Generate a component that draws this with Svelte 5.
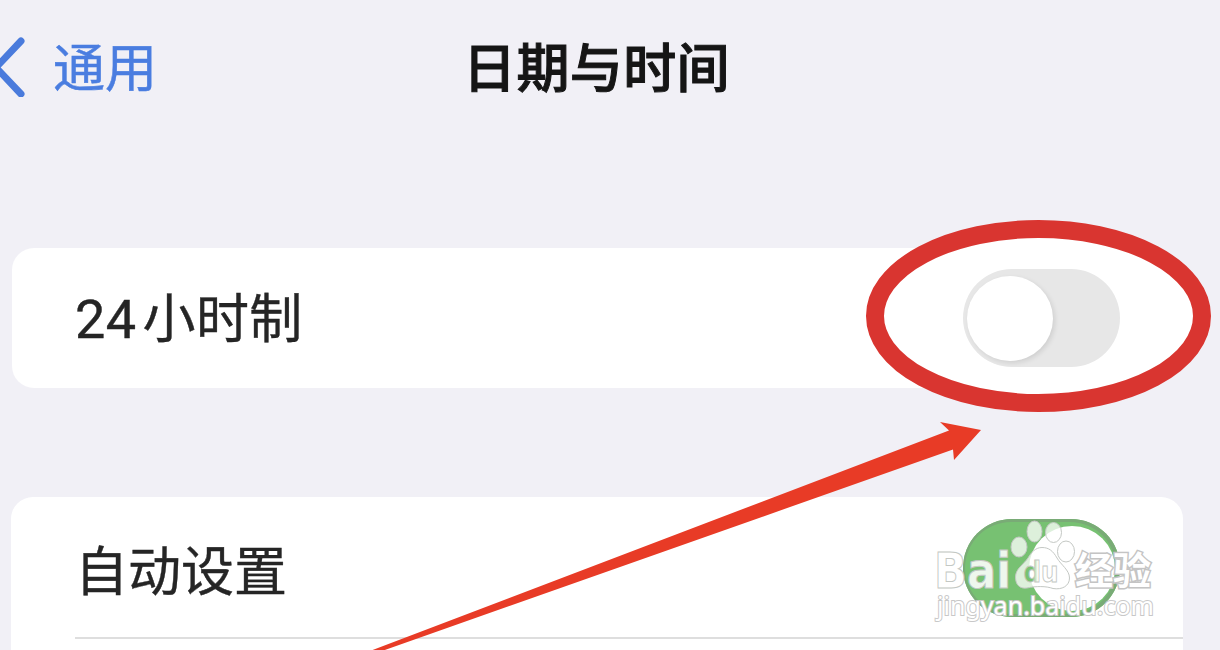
<script>
  const rows = [
    { prefix: "24", label: "小时制", on: false },
    { prefix: "", label: "自动设置", on: true },
  ];
</script>

<main class="screen">
  <svg class="marks" width="1220" height="650" viewBox="0 0 1220 650">
    <ellipse cx="1038.5" cy="316" rx="163.5" ry="87" fill="#fff" />
  </svg>

  <header class="navbar">
    <div class="back">
      <svg width="30" height="64" viewBox="0 0 30 64">
        <path d="M21 8 L-4 34.5 L21 61" />
      </svg>
      <span>通用</span>
    </div>
    <h1>日期与时间</h1>
  </header>

  {#each rows as row, i}
    <section class="card" class:last={i === 1}>
      <div class="row">
        <div class="label">
          {#if row.prefix}<span class="digits">{row.prefix}</span>{/if}<span>{row.label}</span>
        </div>
        <div class="toggle" class:on={row.on}><div class="knob"></div></div>
      </div>
    </section>
  {/each}

  <svg class="marks" width="1220" height="650" viewBox="0 0 1220 650">
    <ellipse class="ring" cx="1038.5" cy="316" rx="163.5" ry="87" />
    <path class="arrow" d="M370 651 L949 430.5 L940 422 L981 430 L954 460 L953 449.5 L382 651 Z" />
  </svg>

  <svg class="watermark" width="240" height="110" viewBox="925 515 240 110">
    <defs>
      <linearGradient id="cut" gradientUnits="userSpaceOnUse" x1="1032" y1="0" x2="1038" y2="0">
        <stop offset="0" stop-color="#77c172" />
        <stop offset="1" stop-color="#fff" />
      </linearGradient>
    </defs>
    <text class="brand" x="934" y="587.5" textLength="77" lengthAdjust="spacingAndGlyphs">Bai</text>
    <g class="paw">
      <ellipse cx="1019" cy="547" rx="8" ry="10" />
      <ellipse cx="1034.5" cy="531.5" rx="7.5" ry="10.5" />
      <ellipse cx="1053.5" cy="532.5" rx="8" ry="10" />
      <ellipse cx="1066" cy="551.5" rx="8.5" ry="10.5" />
      <path d="M1042 547.5 C1035 547.5 1031 553 1028 558 C1023 565 1015.5 569 1015.5 577 C1015.5 585 1020 589 1027 588 C1036 586 1046 586 1053 588.5 C1062 590 1069.5 586 1069.5 578 C1069.5 570 1061 565 1057 558 C1053 551 1049 547.5 1042 547.5 Z" />
    </g>
    <text class="du" x="1023.5" y="581.5" textLength="35" lengthAdjust="spacingAndGlyphs">du</text>
    <text class="cn" x="1075" y="584" textLength="76" lengthAdjust="spacingAndGlyphs">经验</text>
    <text class="url" x="937" y="615" textLength="217">jingyan.baidu.com</text>
  </svg>
</main>

<style>
  :global(body) {
    background: #f1f0f6;
  }
  .screen {
    position: relative;
    width: 1220px;
    height: 650px;
    overflow: hidden;
    background: #f1f0f6;
    color: #252525;
    font-family: "Noto Sans CJK SC", sans-serif;
    font-size: 53px;
    line-height: 72px;
  }
  .navbar,
  .card {
    position: relative;
  }
  .navbar {
    display: grid;
    grid-template-columns: 463px 1fr;
    align-items: start;
    height: 248px;
    padding-top: 29px;
    box-sizing: border-box;
  }
  .back {
    display: flex;
    align-items: center;
    gap: 23px;
    color: #4a7de0;
    font-size: 52px;
    -webkit-text-stroke: 0.5px #4a7de0;
  }
  .back path {
    fill: none;
    stroke: #4a7bdc;
    stroke-width: 7;
    stroke-linecap: round;
  }
  h1 {
    margin: 0;
    color: #151515;
    font-size: 53px;
    font-weight: 500;
    letter-spacing: 0.4px;
    -webkit-text-stroke: 1px #151515;
  }
  .card {
    width: 1171px;
    height: 140px;
    margin: 0 0 109px 12px;
    border-radius: 22px;
    background: linear-gradient(#fff, #fff) 0 0 / 1023px 100% no-repeat;
  }
  .card.last {
    width: 1172px;
    height: 180px;
    margin: 0 0 0 11px;
    background: #fff;
  }
  .row {
    display: flex;
    align-items: center;
    justify-content: space-between;
    height: 139px;
    margin-left: 63px;
    padding-right: 63px;
  }
  .label {
    -webkit-text-stroke: 0.4px #252525;
    letter-spacing: 0.4px;
  }
  .last .row {
    height: 142px;
    margin-left: 64px;
    padding-top: 1px;
    box-sizing: border-box;
    border-bottom: 2px solid #dedede;
  }
  .last .label {
    letter-spacing: 0;
  }
  .digits {
    margin-right: 6px;
    font-family: Roboto, sans-serif;
    font-size: 54px;
  }
  .toggle {
    width: 157px;
    height: 98px;
    padding: 7px 4px;
    border-radius: 49px;
    box-sizing: border-box;
    background: #e7e7e7;
  }
  .knob {
    width: 86px;
    height: 85px;
    border-radius: 50%;
    background: #fff;
    box-shadow: 2px 2px 5px rgba(0, 0, 0, 0.1);
  }
  .toggle.on {
    padding-right: 5px;
    background: #77c172;
    box-shadow: inset -1px 0 0 3px #79ab76;
  }
  .on .knob {
    margin-left: auto;
    box-shadow: none;
  }
  .marks {
    position: absolute;
    inset: 0;
  }
  .ring {
    fill: none;
    stroke: #d93530;
    stroke-width: 18;
  }
  .arrow {
    fill: #e83b26;
  }
  .watermark {
    position: absolute;
    left: 925px;
    top: 515px;
    fill: rgba(255, 255, 255, 0.75);
    stroke: #c4c8c4;
    stroke-width: 1;
  }
  .brand {
    font: 700 49px "DejaVu Sans", sans-serif;
    fill: rgba(255, 255, 255, 0.9);
  }
  .du {
    font: 700 29px "DejaVu Sans", sans-serif;
    fill: url(#cut);
  }
  .cn {
    font: 700 38px "Noto Sans CJK SC", sans-serif;
    fill: #fff;
    stroke: #c4c4c4;
    stroke-width: 3px;
    paint-order: stroke;
  }
  .url {
    font: 25px "Noto Sans", sans-serif;
    fill: #fff;
    stroke: #c8c8c8;
    stroke-width: 2px;
    paint-order: stroke;
  }
</style>
